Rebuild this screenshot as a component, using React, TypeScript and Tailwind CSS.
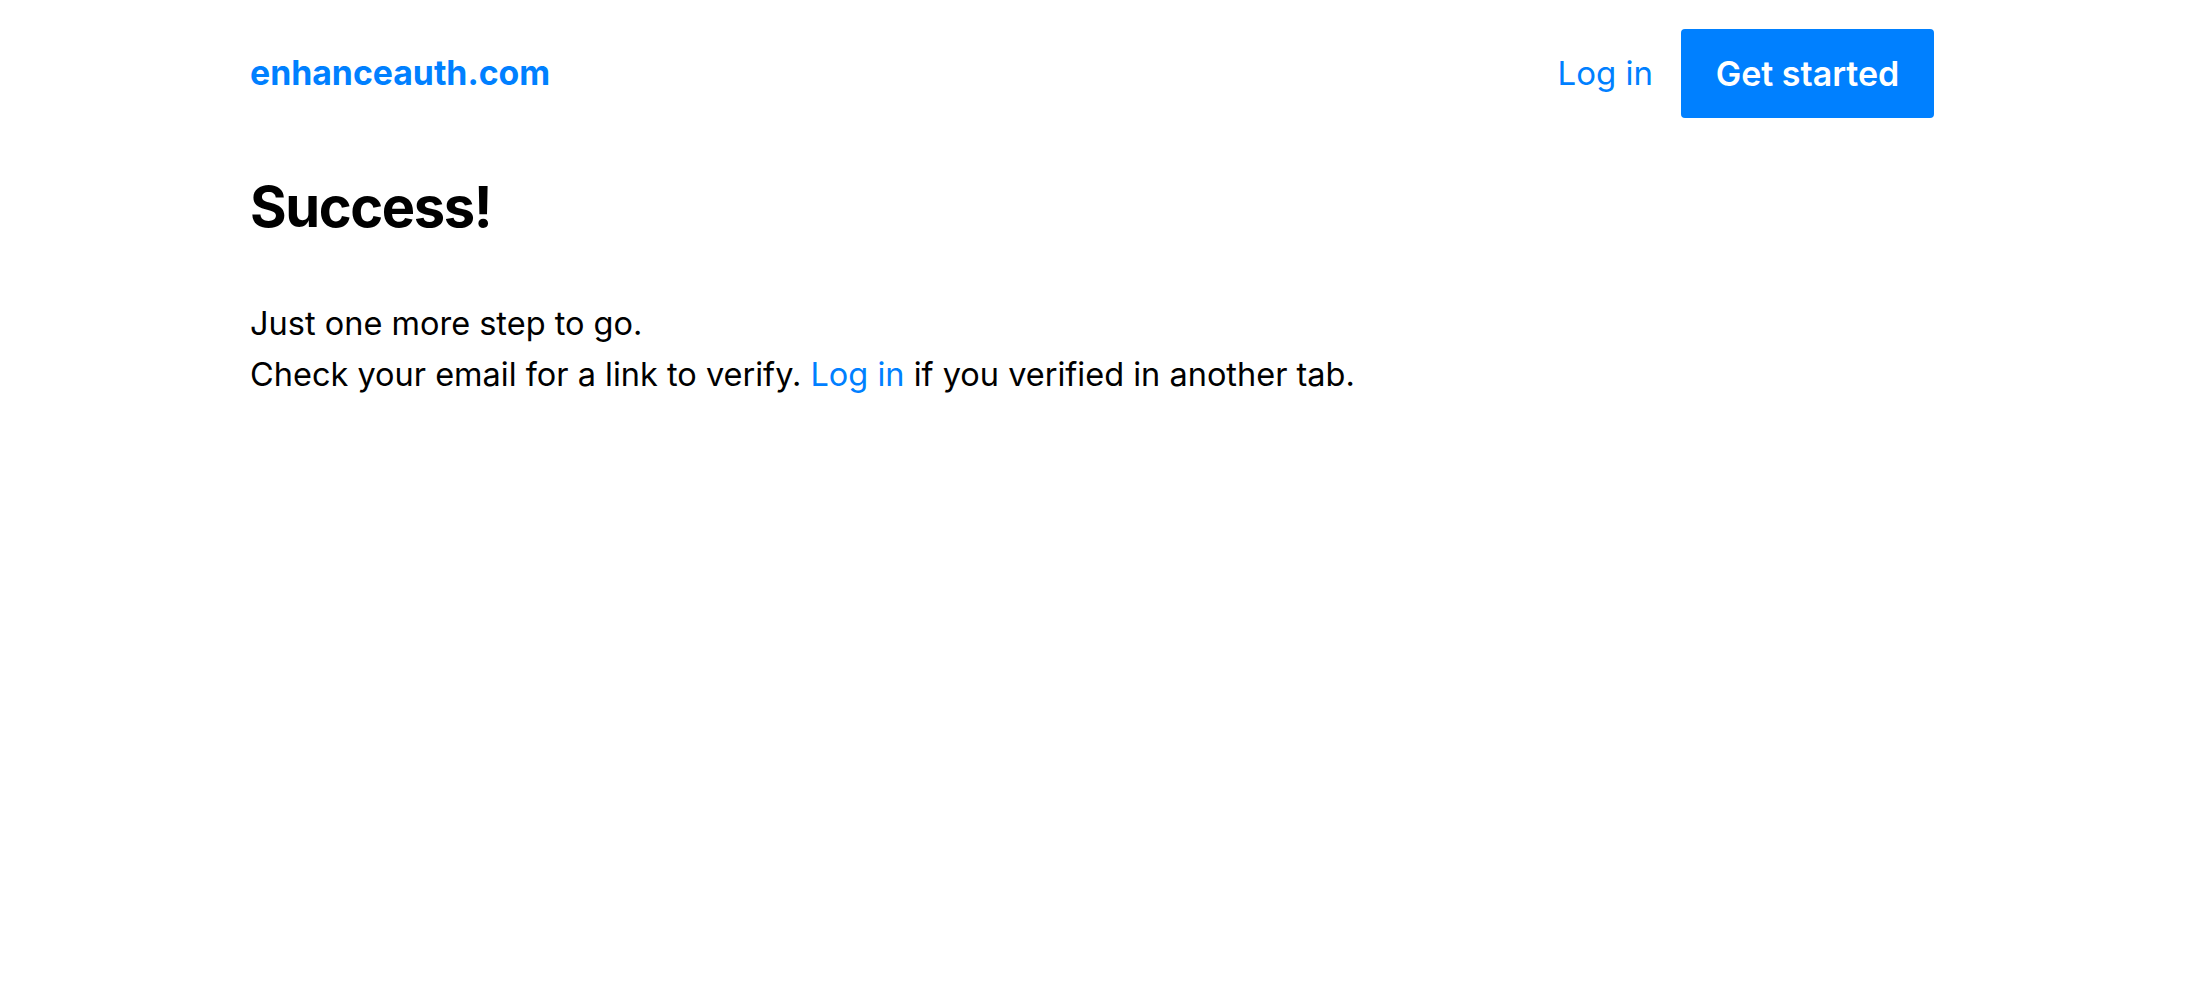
export default function App() {
  return (
    <div className="min-h-screen bg-white text-black">
      <div className="ml-[250px] w-[1684px] font-['Inter',sans-serif]">
        {/* Header */}
        <header className="flex items-center justify-between pt-[29px]">
          <a href="#" className="text-[33.8px] font-bold text-[#0080ff]">
            enhanceauth.com
          </a>
          <nav className="flex items-center gap-[28px]">
            <a href="#" className="text-[33px] text-[#0080ff]">
              Log in
            </a>
            <a
              href="#"
              className="flex h-[89px] w-[253px] items-center justify-center rounded-[4px] bg-[#0080ff] text-[34px] font-semibold text-white"
            >
              Get started
            </a>
          </nav>
        </header>

        {/* Body */}
        <main className="pt-[54px]">
          <h1 className="text-[56px] font-bold leading-[70px] tracking-[-0.025em]">Success!</h1>
          <div className="mt-[56px] text-[32.5px] leading-[51px]">
            <p>Just one more step to go.</p>
            <p>
              Check your email for a link to verify.{" "}
              <a href="#" className="text-[#0080ff]">
                Log in
              </a>{" "}
              if you verified in another tab.
            </p>
          </div>
        </main>
      </div>
    </div>
  );
}
